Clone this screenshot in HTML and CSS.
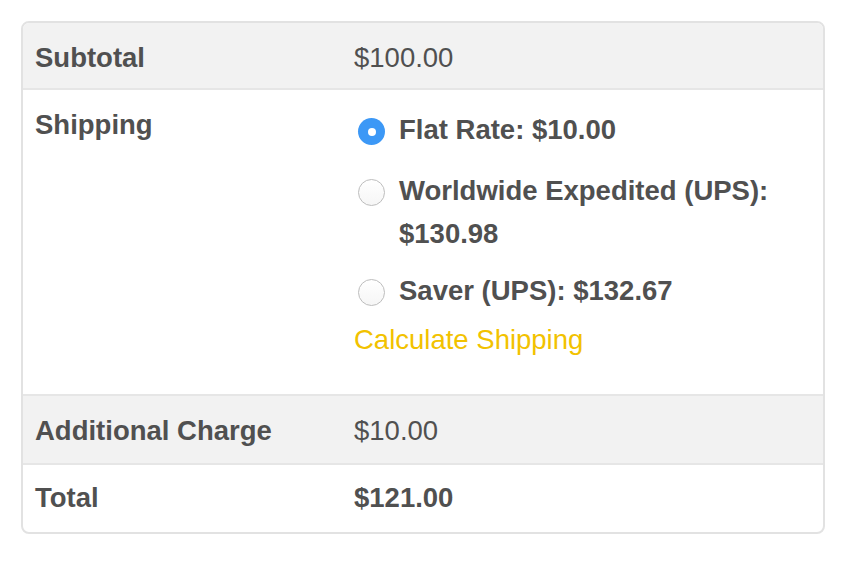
FILE: index.html
```html
<!DOCTYPE html>
<html>
<head>
<meta charset="utf-8">
<link rel="stylesheet" href="styles.css">
</head>
<body>
<div class="card">
  <div class="row shaded">
    <div class="label">Subtotal</div>
    <div class="value">$100.00</div>
  </div>
  <div class="row">
    <div class="label">Shipping</div>
    <div class="value ship">
      <ul class="options">
        <li class="option">
          <span class="radio checked"></span>
          <span class="opt-text">Flat Rate: $10.00</span>
        </li>
        <li class="option">
          <span class="radio"></span>
          <span class="opt-text">Worldwide Expedited (UPS): $130.98</span>
        </li>
        <li class="option">
          <span class="radio"></span>
          <span class="opt-text">Saver (UPS): $132.67</span>
        </li>
      </ul>
      <a class="calc" href="#">Calculate Shipping</a>
    </div>
  </div>
  <div class="row shaded">
    <div class="label">Additional Charge</div>
    <div class="value">$10.00</div>
  </div>
  <div class="row last">
    <div class="label">Total</div>
    <div class="value strong">$121.00</div>
  </div>
</div>
</body>
</html>
```

FILE: styles.css
```css
html, body {
  margin: 0;
  padding: 0;
  background: #ffffff;
}
body {
  padding: 21px;
  font-family: "Liberation Sans", Arial, sans-serif;
  color: #505050;
}
.card {
  width: 804px;
  box-sizing: border-box;
  border: 2px solid #e2e2e2;
  border-radius: 8px;
  overflow: hidden;
}
.row {
  display: grid;
  grid-template-columns: 319px 1fr;
  border-bottom: 2px solid #e6e6e6;
}
.row.last {
  border-bottom: none;
}
.row.shaded {
  background: #f2f2f2;
}
.label, .value {
  font-size: 27.5px;
  line-height: 40px;
  padding: 15px 12px 10px 12px;
}
.label {
  font-weight: bold;
}
.value.strong {
  font-weight: bold;
}
.row.last .label, .row.last .value {
  padding-top: 13px;
  padding-bottom: 14px;
}
.row.shaded:nth-child(3) .label, .row.shaded:nth-child(3) .value {
  padding-top: 15px;
  padding-bottom: 12px;
}
.value.ship {
  padding-bottom: 34px;
}
.options {
  list-style: none;
  margin: 3px 0 0 0;
  padding: 0;
}
.option {
  display: flex;
  align-items: flex-start;
  font-weight: bold;
  line-height: 43px;
  margin-bottom: 14px;
}
.option:first-child {
  margin-bottom: 18px;
}
.option:last-child {
  margin-bottom: 8px;
}
.radio {
  flex: none;
  width: 27px;
  height: 27px;
  box-sizing: border-box;
  border-radius: 50%;
  margin: 10px 14px 0 4px;
  border: 1.5px solid #bdbdbd;
  background: linear-gradient(#ffffff, #f6f6f6);
  position: relative;
}
.radio.checked {
  border: none;
  background: #3c98f6;
}
.radio.checked::after {
  content: "";
  position: absolute;
  left: 9.5px;
  top: 9.5px;
  width: 8px;
  height: 8px;
  border-radius: 50%;
  background: #ffffff;
}
.opt-text {
  flex: 1;
  min-width: 0;
  padding-right: 30px;
}
.calc {
  display: block;
  color: #f2c200;
  text-decoration: none;
  font-weight: normal;
}
```
